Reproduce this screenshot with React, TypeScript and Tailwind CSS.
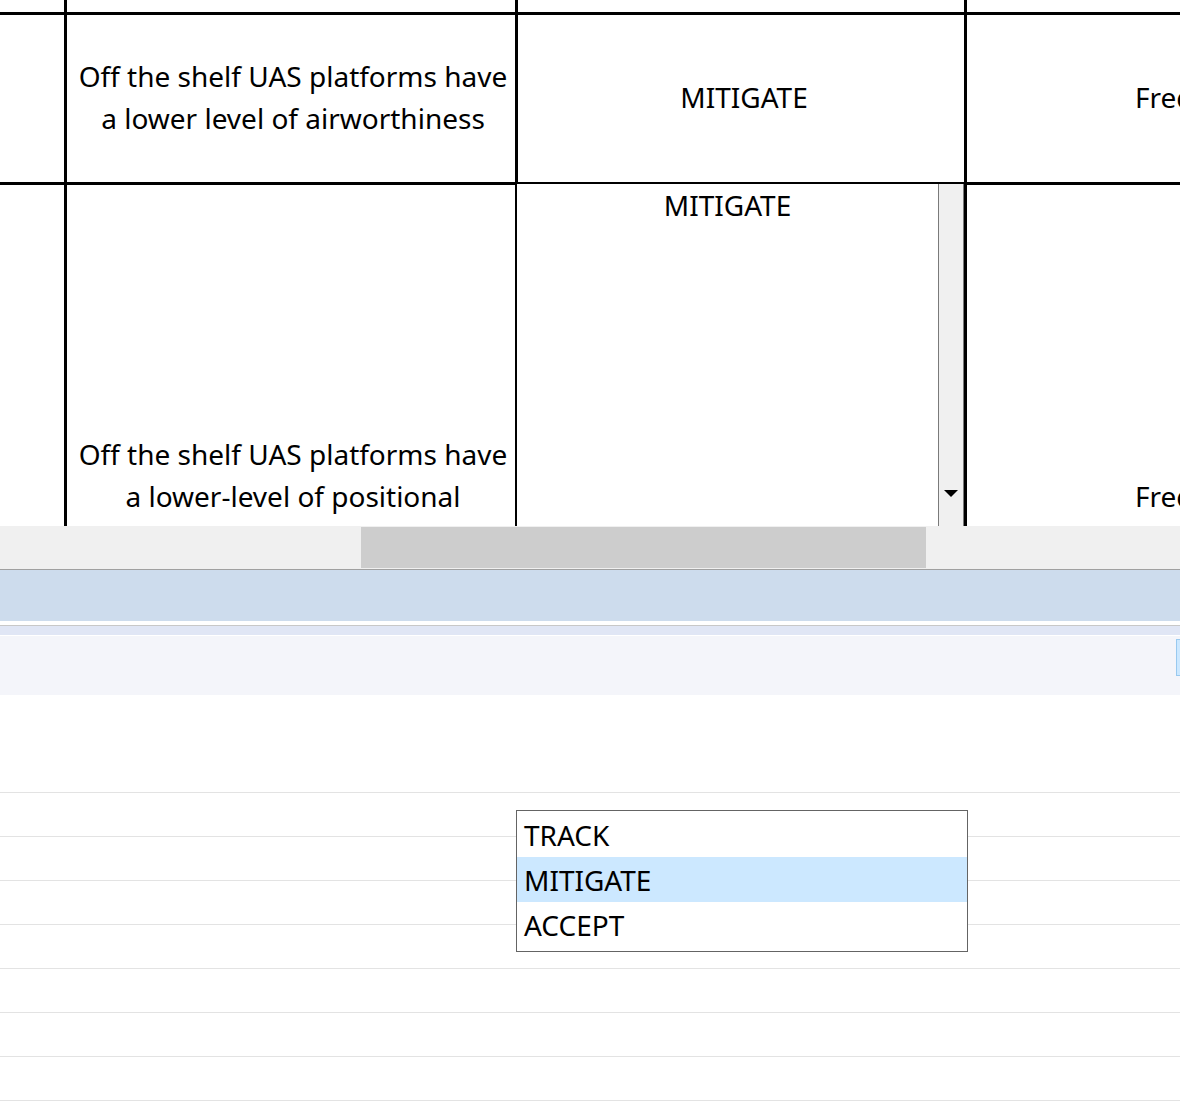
import React from "react";

const font = { fontFamily: '"Noto Sans", "Open Sans", sans-serif' };

function Cell({ className = "", children }: { className?: string; children?: React.ReactNode }) {
  return <div className={`shrink-0 border-r-[3px] border-b-[3px] border-black ${className}`}>{children}</div>;
}

export default function App() {
  return (
    <div className="relative h-[1109px] w-[1180px] overflow-hidden bg-white text-[28px] leading-[42px] text-black" style={font}>
      {/* sheet grid */}
      <div className="h-[526px] overflow-hidden">
        <div className="flex h-[15px]">
          <Cell className="w-[67px]" />
          <Cell className="w-[451px]" />
          <Cell className="w-[449px]" />
          <div className="flex-1 border-b-[3px] border-black" />
        </div>
        <div className="flex h-[170px]">
          <Cell className="w-[67px]" />
          <Cell className="flex w-[451px] items-center justify-center pb-[4px] text-center">
            <span className="pl-1">
              Off the shelf UAS platforms have
              <br />
              a lower level of airworthiness
            </span>
          </Cell>
          <Cell className="flex w-[449px] items-center justify-center pb-[3px] pl-[6px]">MITIGATE</Cell>
          <div className="flex flex-1 items-center overflow-hidden whitespace-nowrap border-b-[3px] border-black pb-[3px] pl-[168px]">Frequent</div>
        </div>
        <div className="flex h-[400px]">
          <Cell className="w-[67px]" />
          <Cell className="flex w-[451px] items-start justify-center pt-[248px] text-center">
            <span className="pl-1">
              Off the shelf UAS platforms have
              <br />
              a lower-level of positional
            </span>
          </Cell>
          <Cell className="relative w-[449px]">
            <div className="absolute -left-[3px] -top-[3px] bottom-0 right-0 flex border-l-2 border-t-2 border-black bg-white">
              <div className="flex-1 text-center">MITIGATE</div>
              <div className="relative w-[26px] border-x border-[#7a7a7a] bg-[#f0f0f0]">
                <svg className="absolute left-[5px] top-[306px]" width="14" height="8" viewBox="0 0 14 8">
                  <path d="M0 0h14L7 7z" fill="#000" />
                </svg>
              </div>
            </div>
          </Cell>
          <div className="flex-1 overflow-hidden whitespace-nowrap pl-[168px] pt-[290px]">Frequent</div>
        </div>
      </div>

      {/* horizontal scrollbar */}
      <div className="h-[44px] border-b border-[#a0a0a0] bg-[#f0f0f0] pt-px">
        <div className="ml-[361px] h-[41px] w-[565px] bg-[#cdcdcd]" />
      </div>

      {/* ribbon bands */}
      <div className="h-[51px] bg-[#cddced]" />
      <div className="h-[5px] border-b border-[#c8c8c8]" />
      <div className="h-[10px] border-b border-white bg-[#e0e6f5]" />
      <div className="flex h-[59px] justify-end bg-[#f4f5fa] pt-[3px]">
        <div className="h-[37px] w-[4px] border border-r-0 border-[#99c9ef] bg-[#cce8ff]" />
      </div>

      {/* blank rows */}
      <div className="pt-[97px]">
        {Array.from({ length: 8 }, (_, i) => (
          <div key={i} className="h-[44px] border-t border-[#e3e3e3]" />
        ))}
      </div>

      {/* open dropdown list */}
      <div className="absolute left-[516px] top-[810px] w-[452px] border border-[#646464] bg-white pb-[4px] pt-px leading-[44px]">
        <div className="pl-[7px] pt-px">TRACK</div>
        <div className="bg-[#cce8ff] pl-[7px] pt-px">MITIGATE</div>
        <div className="pl-[7px] pt-px">ACCEPT</div>
      </div>
    </div>
  );
}
